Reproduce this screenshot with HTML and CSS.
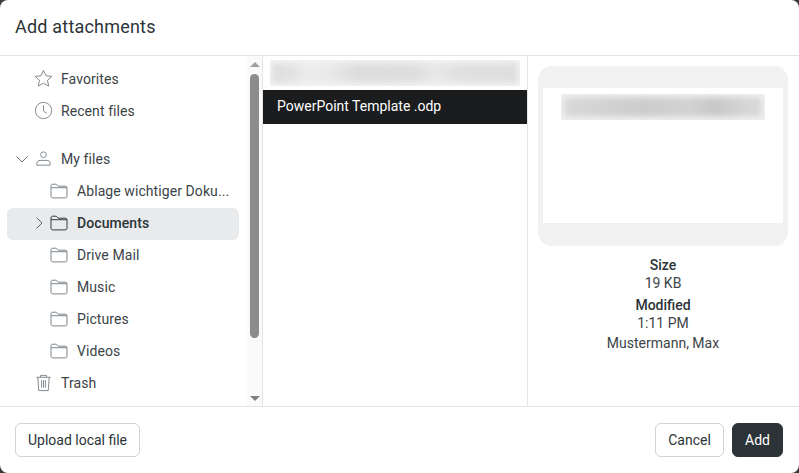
FILE: index.html
```html
<!DOCTYPE html>
<html lang="en">
<head>
<meta charset="utf-8">
<title>Add attachments</title>
<link rel="stylesheet" href="styles.css">
</head>
<body>
<svg class="defs" width="0" height="0" aria-hidden="true">
  <symbol id="folder" viewBox="0 0 18 16"><path d="M1 3C1 1.900 1.700 1.200 2.800 1.200H6.300L8.200 3.200H15.200C16.400 3.200 17 3.900 17 5V13C17 14.200 16.400 14.900 15.200 14.900H2.800C1.700 14.900 1 14.200 1 13ZM1 4.700H17" fill="none" stroke="currentColor" stroke-width="1"/></symbol>
</svg>
<main class="dialog">
  <header class="head"><h1 class="title">Add attachments</h1></header>
  <div class="body">
    <nav class="side">
      <div class="tree">
        <div class="row lvl0"><svg class="ic" viewBox="0 0 20 20"><path d="M10 1.500l2.600 5.600 6.200.7-4.600 4.100 1.300 6.100L10 14.900l-5.500 3.100 1.300-6.100-4.600-4.100 6.200-.7z" fill="none" stroke="currentColor"/></svg><span>Favorites</span></div>
        <div class="row lvl0"><svg class="ic" viewBox="0 0 20 20"><circle cx="10" cy="10" r="8.600" fill="none" stroke="currentColor"/><path d="M10 4.500V10.500L13.500 13" fill="none" stroke="currentColor"/></svg><span>Recent files</span></div>
        <div class="row lvl0 gap"><svg class="chev" viewBox="0 0 12 12"><path d="M.5 3.500L6 9L11.500 3.500" fill="none" stroke="currentColor"/></svg><svg class="ic" viewBox="0 0 20 20"><circle cx="10" cy="6" r="3" fill="none" stroke="currentColor"/><path d="M3 17V15C3 13.200 4.500 12 6.500 12H13.500C15.500 12 17 13.200 17 15V17Z" fill="none" stroke="currentColor"/></svg><span>My files</span></div>
        <div class="row lvl1"><svg class="folder"><use href="#folder"/></svg><span>Ablage wichtiger Doku...</span></div>
        <div class="row lvl1 active"><svg class="chev-r" viewBox="0 0 12 12"><path d="M3.500 .5L9 6L3.500 11.500" fill="none" stroke="currentColor"/></svg><svg class="folder"><use href="#folder"/></svg><span>Documents</span></div>
        <div class="row lvl1"><svg class="folder"><use href="#folder"/></svg><span>Drive Mail</span></div>
        <div class="row lvl1"><svg class="folder"><use href="#folder"/></svg><span>Music</span></div>
        <div class="row lvl1"><svg class="folder"><use href="#folder"/></svg><span>Pictures</span></div>
        <div class="row lvl1"><svg class="folder"><use href="#folder"/></svg><span>Videos</span></div>
        <div class="row lvl0"><svg class="ic" viewBox="0 0 20 20"><path d="M2.500 4.500H17.500M7 4.500V2.500H13V4.500M4 4.500L5 18.500H15L16 4.500" fill="none" stroke="currentColor"/><path d="M8 7.500V15.500M10 7.500V15.500M12 7.500V15.500" fill="none" stroke="currentColor"/></svg><span>Trash</span></div>
      </div>
      <div class="scrollbar">
        <div class="arrow up"></div>
        <div class="thumb"></div>
        <div class="spacer"></div>
        <div class="arrow down"></div>
      </div>
    </nav>
    <section class="files">
      <div class="file blurred"><span class="smear"></span></div>
      <div class="file selected">PowerPoint Template .odp</div>
    </section>
    <aside class="detail">
      <div class="preview"><div class="page"><span class="page-smear"></span></div></div>
      <dl class="meta">
        <dt>Size</dt><dd>19 KB</dd>
        <dt class="second">Modified</dt><dd>1:11 PM</dd>
        <dd class="author">Mustermann, Max</dd>
      </dl>
    </aside>
  </div>
  <footer class="foot">
    <button class="btn upload">Upload local file</button>
    <div class="actions">
      <button class="btn cancel">Cancel</button>
      <button class="btn primary">Add</button>
    </div>
  </footer>
</main>
</body>
</html>
```
FILE: styles.css
```css
* { box-sizing: border-box; }
html, body { margin: 0; height: 100%; background: #3a3a3a; }
body { font-family: Roboto, "Liberation Sans", sans-serif; color: #333b40; overflow: hidden; }
.defs { position: absolute; }
.dialog { width: 799px; height: 473px; background: #fff; border-radius: 8px; display: flex; flex-direction: column; overflow: hidden; }
.head { height: 56px; border-bottom: 1px solid #e3e4e5; display: flex; align-items: center; padding: 0 15px 3px; flex: none; }
.title { margin: 0; font-size: 18px; font-weight: 400; color: #2c3438; letter-spacing: .2px; }
.body { flex: 1; display: flex; min-height: 0; }
.side { width: 263px; flex: none; border-right: 1px solid #e3e4e5; display: flex; }
.tree { width: 247px; padding: 8px 0 0 7px; flex: none; }
.row { height: 32px; width: 232px; display: flex; align-items: center; font-size: 14px; border-radius: 6px; color: #3c4448; padding-bottom: 3px; letter-spacing: .08px; }
.lvl0 { padding-left: 27px; }
.lvl1 { padding-left: 43px; }
.gap { margin-top: 16px; padding-left: 9px; }
.ic { width: 19px; height: 19px; color: #7c858a; margin-right: 8px; flex: none; }
.chev { width: 12px; height: 12px; color: #6a7378; margin-right: 6px; flex: none; }
.folder { width: 18px; height: 16px; color: #7c858a; margin-right: 9px; flex: none; }
.active { background: #e9eaec; font-weight: 500; color: #2c3438; padding-left: 26px; }
.active .folder { color: #343c40; }
.chev-r { width: 12px; height: 12px; margin-right: 5px; color: #5a6368; flex: none; }
.scrollbar { width: 15px; background: #fafafa; display: flex; flex-direction: column; align-items: center; padding: 6px 0 5px; }
.arrow { width: 0; height: 0; border-left: 5px solid transparent; border-right: 5px solid transparent; flex: none; }
.up { border-bottom: 5px solid #a0a0a0; }
.down { border-top: 5px solid #808080; }
.thumb { width: 9px; height: 264px; background: #8c8c8c; border-radius: 5px; margin-top: 7px; flex: none; }
.spacer { flex: 1; }
.files { width: 265px; flex: none; border-right: 1px solid #e3e4e5; }
.file { height: 34px; display: flex; align-items: center; padding-left: 14px; font-size: 14px; }
.blurred { padding: 0 7px; }
.smear { display: block; width: 250px; height: 26px; overflow: hidden; background: #f4f4f4; }
.smear::before { content: ""; display: block; height: 20px; margin: 3px 2px; background: linear-gradient(90deg, #dddddd 0%, #e2e2e2 8%, #ececec 14%, #e9e9e9 24%, #dcdddc 34%, #dedede 58%, #e8e8e8 66%, #e0e0e0 78%, #dedede 100%); filter: blur(3px); }
.selected { background: #1a1c1e; color: #fff; padding-bottom: 2px; }
.detail { flex: 1; padding: 10px 11px 0 10px; }
.preview { height: 180px; background: #f1f1f1; border-radius: 14px; padding: 22px 5px 23px; }
.page { height: 135px; background: #fff; padding: 6px 18px; }
.page-smear { display: block; width: 204px; height: 26px; overflow: hidden; background: #f2f2f2; }
.page-smear::before { content: ""; display: block; height: 20px; margin: 3px 3px; background: linear-gradient(90deg, #d8d8d8 0%, #d2d2d2 20%, #cccccc 40%, #d2d2d2 62%, #c8c8c8 76%, #d4d4d4 90%, #d8d8d8 100%); filter: blur(3px); }
.meta { margin: 10px 0 0; text-align: center; font-size: 14px; line-height: 18px; color: #3c4448; }
.meta dt { font-weight: 500; color: #2c3438; }
.meta dd { margin: 0; }
.meta .second { margin-top: 4px; }
.meta .author { margin-top: 2px; }
.foot { height: 67px; flex: none; border-top: 1px solid #e3e4e5; display: flex; justify-content: space-between; align-items: center; padding: 0 16px 0 15px; }
.actions { display: flex; gap: 8px; }
.btn { height: 34px; padding: 0 0 1px; font: 400 14px Roboto, "Liberation Sans", sans-serif; color: #2c3438; background: #fff; border: 1px solid #ced3d8; border-radius: 6px; }
.upload { width: 125px; }
.cancel { width: 69px; }
.primary { width: 51px; background: #2c3438; border-color: #2c3438; color: #fff; }
```
